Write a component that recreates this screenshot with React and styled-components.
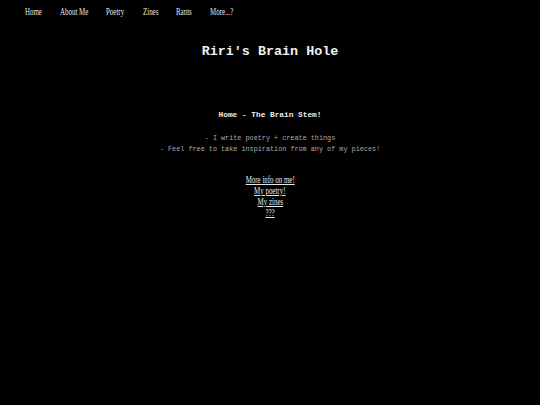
import React from "react";
import styled, { createGlobalStyle } from "styled-components";

const Global = createGlobalStyle`
  html, body { margin: 0; padding: 0; background: #000; }
  body { width: 540px; height: 405px; overflow: hidden; }
`;

const Page = styled.div`
  width: 540px;
  min-height: 405px;
  background: #000;
  color: #ddd;
  display: flex;
  flex-direction: column;
`;

const Nav = styled.nav`
  display: flex;
  align-items: center;
  height: 22px;
  padding: 0 0 2px 25px;
  gap: 18px;
`;

const NavLink = styled.a`
  font-family: "Liberation Serif", serif;
  font-size: 10.5px;
  color: #e6e6e6;
  text-decoration: none;
  display: inline-block;
  width: ${(p) => p.$w}px;
  white-space: nowrap;
  span {
    display: inline-block;
    transform: scaleX(0.66);
    transform-origin: left center;
  }
`;

const Main = styled.main`
  display: flex;
  flex-direction: column;
  align-items: center;
  font-family: "Liberation Mono", monospace;
`;

const Title = styled.h1`
  margin: 19px 0 0;
  font-size: 13.4px;
  font-weight: bold;
  color: #f0f0f0;
  line-height: 18px;
`;

const Heading = styled.h2`
  margin: 48px 0 0;
  font-size: 7.8px;
  font-weight: bold;
  color: #eee;
  line-height: 12px;
`;

const Body = styled.p`
  margin: 12px 0 0;
  font-size: 6.8px;
  line-height: 11px;
  color: #aaa;
  text-align: center;
`;

const Links = styled.div`
  margin-top: 19px;
  display: flex;
  flex-direction: column;
  align-items: center;
`;

const CLink = styled.a`
  font-family: "Liberation Serif", serif;
  font-size: 10.5px;
  line-height: 11px;
  color: #e6e6e6;
  text-decoration: underline;
  display: inline-block;
  white-space: nowrap;
  transform: scaleX(0.66);
  transform-origin: center center;
`;

const navItems = [
  ["Home", 17],
  ["About Me", 28],
  ["Poetry", 19],
  ["Zines", 15],
  ["Rants", 16],
  ["More...?", 24],
];

const links = ["More info on me!", "My poetry!", "My zines", "???"];

export default function App() {
  return (
    <>
      <Global />
      <Page>
        <Nav>
          {navItems.map(([t, w]) => (
            <NavLink key={t} href="#" $w={w}>
              <span>{t}</span>
            </NavLink>
          ))}
        </Nav>
        <Main>
          <Title>Riri's Brain Hole</Title>
          <Heading>Home - The Brain Stem!</Heading>
          <Body>
            - I write poetry + create things
            <br />- Feel free to take inspiration from any of my pieces!
          </Body>
          <Links>
            {links.map((t) => (
              <CLink key={t} href="#">
                {t}
              </CLink>
            ))}
          </Links>
        </Main>
      </Page>
    </>
  );
}
